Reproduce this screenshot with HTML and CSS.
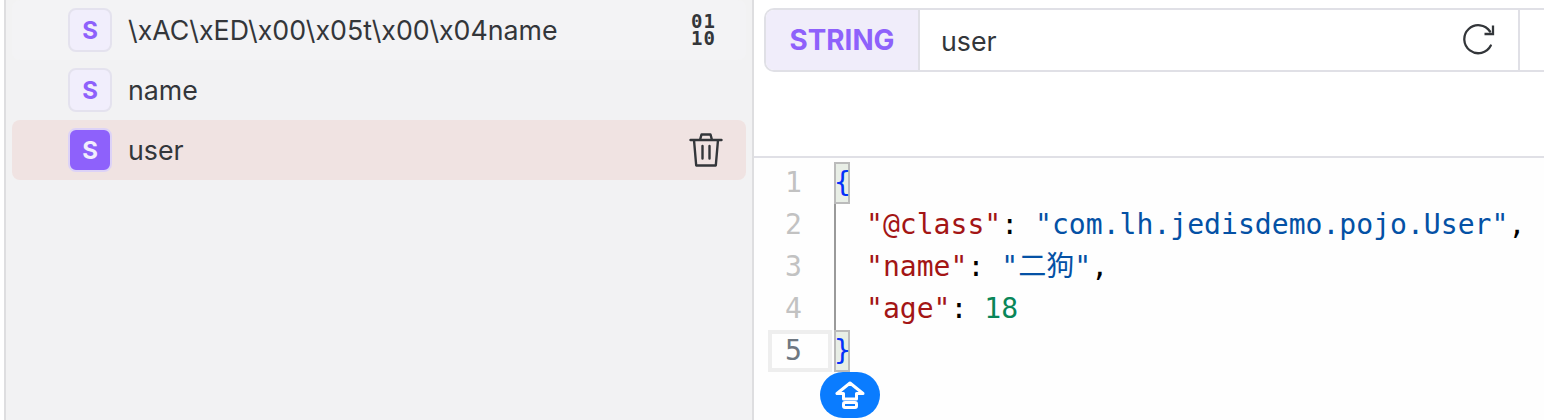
FILE: index.html
```html
<!DOCTYPE html>
<html lang="en">
<head>
<meta charset="utf-8">
<title>Redis keys</title>
<link rel="stylesheet" href="styles.css">
</head>
<body>
<div class="app">
  <aside class="sidebar">
    <ul class="keys">
      <li class="key key-hover">
        <span class="badge">S</span>
        <span class="key-name">\xAC\xED\x00\x05t\x00\x04name</span>
        <span class="binary">01<br>10</span>
      </li>
      <li class="key">
        <span class="badge">S</span>
        <span class="key-name">name</span>
      </li>
      <li class="key key-active">
        <span class="badge badge-active">S</span>
        <span class="key-name">user</span>
        <svg class="trash" width="34" height="36" viewBox="0 0 34 36" fill="none" stroke="#33363a" stroke-width="2.4" stroke-linejoin="round" stroke-linecap="round">
          <path d="M1.5 8h31M5 8l2.2 25.500h19.600L29 8M11 8l1.500-5.500h9L23 8M13.500 14v12.500M20.500 14v12.500"/>
        </svg>
      </li>
    </ul>
  </aside>
  <main class="detail">
    <div class="toolbar-wrap">
      <div class="toolbar">
        <span class="type">STRING</span>
        <div class="name-box">
          <span class="name-text">user</span>
          <svg class="refresh" width="32" height="32" viewBox="0 0 32 32" fill="none" stroke="#33363a" stroke-width="2.300" stroke-linecap="round">
            <path d="M27.800 21.500A14 14 0 1 1 27 7.500"/>
            <path d="M30 1.500V10h-8.500" stroke-linecap="butt"/>
          </svg>
        </div>
        <div class="tool-rest"></div>
      </div>
    </div>
    <div class="editor">
      <div class="gutter">
        <div class="num">1</div>
        <div class="num">2</div>
        <div class="num">3</div>
        <div class="num">4</div>
        <div class="num num-current">5</div>
      </div>
      <div class="code">
        <div class="line"><span class="bracket">{</span></div>
        <div class="line guide"><span class="k">"@class"</span>: <span class="s">"com.lh.jedisdemo.pojo.User"</span>,</div>
        <div class="line guide"><span class="k">"name"</span>: <span class="s">"二狗"</span>,</div>
        <div class="line guide"><span class="k">"age"</span>: <span class="n">18</span></div>
        <div class="line"><span class="bracket">}</span></div>
      </div>
      <button class="top-btn" type="button" aria-label="Back to top">
        <svg width="30" height="28" viewBox="0 0 30 28" fill="none" stroke="#fff" stroke-width="3" stroke-linejoin="round">
          <path d="M15 2L2 12.500h6.500V18h13v-5.500H28z"/>
          <rect x="8.500" y="21.500" width="13" height="5" rx="1.500"/>
        </svg>
      </button>
    </div>
  </main>
</div>
</body>
</html>
```

FILE: styles.css
```css
* { box-sizing: border-box; }
html, body { margin: 0; height: 100%; overflow: hidden; background: #fff; }
.app { display: flex; width: 1544px; height: 420px; font-family: Inter, "Noto Sans", sans-serif; color: #33363a; }

.sidebar { width: 750px; flex: none; margin-left: 4px; background: #f2f2f3; border-left: 2px solid #dedee0; border-right: 2px solid #dedee0; padding-right: 6px; padding-left: 6px; }
.keys { list-style: none; margin: 0; padding: 0; }
.key { display: flex; align-items: center; height: 60px; padding-left: 56px; padding-right: 24px; border-radius: 8px; font-size: 26.75px; }
.key-hover { background: #f3f3f5; }
.key-active { background: #f0e3e2; }
.badge { flex: none; width: 44px; height: 44px; display: flex; align-items: center; justify-content: center; border: 2px solid #e4e2ee; border-radius: 8px; background: #f1eefc; color: #8e61fb; font-weight: 700; font-size: 24px; }
.badge-active { background: #8e61fb; color: #f1eefc; border-color: #dcd2f7; }
.key-name { flex: 1; margin-left: 16px; white-space: nowrap; }
.binary { width: 24px; margin-right: 7px; font-family: "DejaVu Sans Mono", monospace; font-weight: 700; font-size: 19px; line-height: 17px; letter-spacing: 1px; color: #33363a; }
.trash { flex: none; margin-right: -1px; }

.detail { flex: 1; min-width: 0; display: flex; flex-direction: column; }
.toolbar-wrap { height: 158px; flex: none; padding: 8px 0 0 10px; border-bottom: 2px solid #e0e0e6; }
.toolbar { display: flex; height: 64px; border: 2px solid #e0e0e6; border-right: 0; border-radius: 10px 0 0 10px; overflow: hidden; }
.type { flex: none; width: 154px; display: flex; align-items: center; justify-content: center; background: #f0edfa; border-right: 2px solid #e0e0e6; color: #8e61fb; font-weight: 700; font-size: 27.800px; }
.name-box { flex: none; width: 600px; display: flex; align-items: center; justify-content: space-between; padding: 0 23px 0 21px; border-right: 2px solid #e0e0e6; }
.name-text { font-size: 26.750px; margin-top: 2px; }
.tool-rest { flex: 1; }

.editor { position: relative; flex: 1; display: flex; align-items: flex-start; padding-top: 4px; background: #fefefe; font-family: "DejaVu Sans Mono", "Noto Sans CJK SC", monospace; font-size: 28.080px; line-height: 42px; color: #000; }
.gutter { flex: none; width: 80px; padding-left: 14px; }
.num { width: 64px; height: 42px; padding-right: 30px; text-align: right; color: #c2c2c2; }
.num-current { color: #6e7781; border: 4px solid #eeeeee; padding-right: 26px; line-height: 34px; }
.code { flex: 1; }
.line { height: 42px; white-space: pre; }
.guide { padding-left: 32px; box-shadow: inset 2px 0 0 #9a9a9a; }
.bracket { display: block; width: 16px; height: 42px; background: #e8eee6; border: 2px solid #bbb; color: #0431fa; line-height: 38px; text-indent: -2px; }
.k { color: #a31515; }
.s { color: #0451a5; }
.n { color: #098658; }

.top-btn { position: absolute; left: 66px; top: 214px; width: 60px; height: 46px; padding: 0; display: flex; align-items: center; justify-content: center; border: 0; border-radius: 23px; background: #0a7cff; }
```
